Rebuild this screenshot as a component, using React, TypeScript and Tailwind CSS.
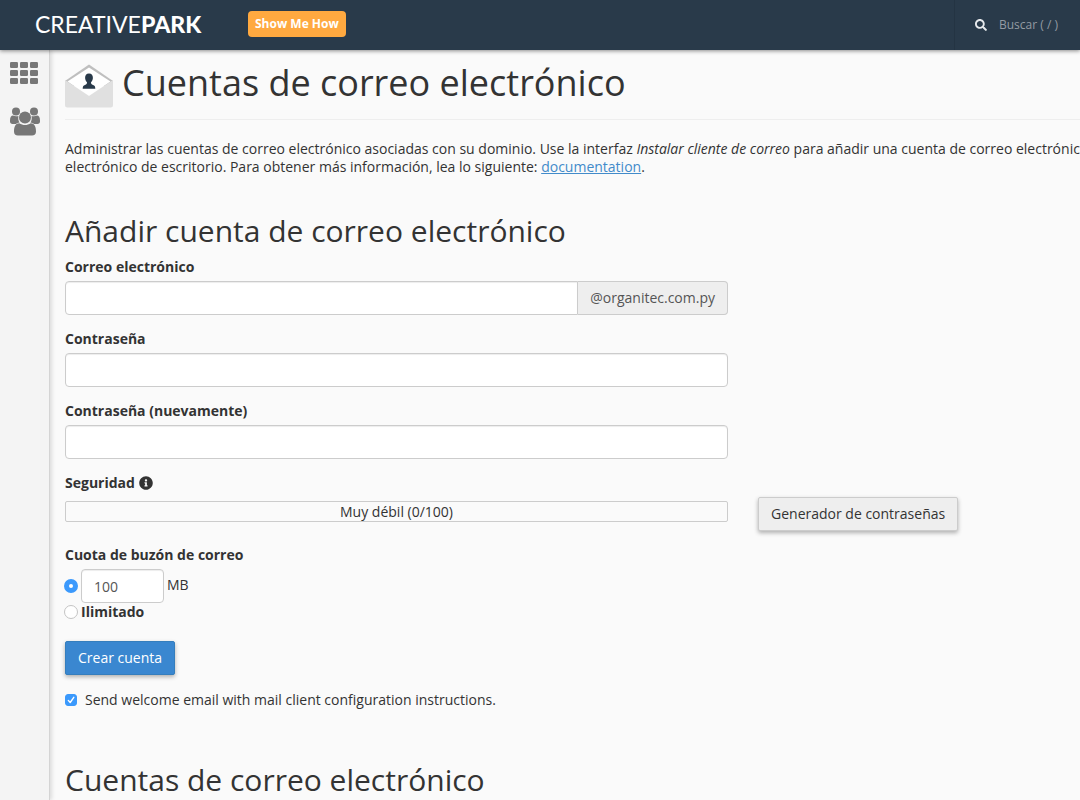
import type { InputHTMLAttributes } from 'react';
import { FaInfoCircle, FaSearch } from 'react-icons/fa';

function GridIcon() {
  return (
    <svg width="28" height="23" viewBox="0 0 28 23" fill="#777" aria-hidden="true">
      {[0, 8, 16].map((y) =>
        [0, 10, 20].map((x) => <rect key={`${x}-${y}`} x={x} y={y} width="8" height="6" rx="1.3" />),
      )}
    </svg>
  );
}

function UsersIcon() {
  return (
    <svg width="30" height="29" viewBox="0 0 30 29" fill="#777" aria-hidden="true">
      <circle cx="6" cy="4.5" r="4" />
      <circle cx="24" cy="4.5" r="4" />
      <path d="M0 13.5C0 10.500 1.200 8.600 3 8.600C4.500 9.400 7 9.600 8.400 8.900C8 11.500 8.400 13.800 9.500 15.400C8 15.500 6.800 16 5.800 17H2.500C1 17 0 16 0 14.600Z" />
      <path d="M30 13.500C30 10.500 28.800 8.600 27 8.600C25.500 9.400 23 9.600 21.600 8.900C22 11.500 21.600 13.800 20.500 15.400C22 15.500 23.200 16 24.200 17H27.500C29 17 30 16 30 14.600Z" />
      <circle cx="15" cy="10.500" r="6" />
      <path d="M4 24.500C4 19.500 5.700 16.300 9.300 16.300C11 17.500 13 18.100 15 18.100C17 18.100 19 17.500 20.700 16.300C24.300 16.300 26 19.500 26 24.500C26 27 24.600 28.500 22 28.500H8C5.400 28.500 4 27 4 24.500Z" />
    </svg>
  );
}

function MailIcon() {
  return (
    <svg className="shrink-0" width="48" height="44" viewBox="0 0 48 44" aria-hidden="true">
      <path d="M0 17L24 0.500L48 17V22H0Z" fill="#bfbfbf" />
      <path d="M2.500 17.500L24 3.500L45.500 17.500L24 32Z" fill="#fff" />
      <path d="M0 16L24 32L48 16V41Q48 43.500 45.500 43.500H2.500Q0 43.500 0 41Z" fill="#e0e0e0" />
      <path d="M24 9.500C26.700 9.500 28 11.500 27.900 14C27.800 16 27 17.300 26 18.200C26 20 26.500 20.400 28 20.900C29.800 21.500 30.300 22.500 30.300 24.800H17.700C17.700 22.500 18.200 21.500 20 20.900C21.500 20.400 22 20 22 18.200C21 17.300 20.200 16 20.100 14C20 11.500 21.300 9.500 24 9.500Z" fill="#293a4a" />
    </svg>
  );
}

const inputLook =
  'h-[34px] border border-[#ccc] bg-white px-3 text-sm text-[#555] shadow-[inset_0_1px_1px_rgba(0,0,0,0.075)] outline-none';

function Field({
  id,
  label,
  suffix,
  ...rest
}: { id: string; label: string; suffix?: string } & InputHTMLAttributes<HTMLInputElement>) {
  return (
    <div className="mb-[15px] w-full max-w-[663px]">
      <label htmlFor={id} className="mb-[5px] block font-bold">
        {label}
      </label>
      <div className="flex">
        <input
          id={id}
          {...rest}
          className={`${inputLook} min-w-0 flex-1 ${suffix ? 'rounded-l-[4px]' : 'rounded-[4px]'}`}
        />
        {suffix && (
          <span className="flex h-[34px] items-center rounded-r-[4px] border border-l-0 border-[#ccc] bg-[#eee] px-3 text-[#555]">
            {suffix}
          </span>
        )}
      </div>
    </div>
  );
}

const radioLook =
  'size-[14px] shrink-0 appearance-none rounded-full border border-[#c4c4c4] bg-white checked:border-[5px] checked:border-[#3b99fc]';

export default function App() {
  return (
    <div className="flex min-h-screen flex-col bg-[#fafafa] font-['Open_Sans',sans-serif] text-sm leading-[18px] text-[#333]">
      <header className="z-10 flex h-[50px] items-stretch bg-[#293a4a] shadow-[0_1px_4px_rgba(0,0,0,0.45)]">
        <div className="flex w-[248px] shrink-0 items-center pl-[35px]">
          <a href="#inicio" className="pb-[2px] font-['Lato',sans-serif] text-[23px] leading-7 text-white">
            CREATIVE<span className="font-black">PARK</span>
          </a>
        </div>
        <button
          type="button"
          className="mt-[11px] h-[26px] rounded-[4px] bg-[#ffa940] px-[7px] text-xs font-bold text-white"
        >
          Show Me How
        </button>
        <label className="ml-auto flex w-[126px] items-center border-l border-[#243443] pl-5">
          <FaSearch className="size-3 text-[#e6e9ec]" aria-hidden="true" />
          <input
            type="search"
            aria-label="Buscar"
            placeholder="Buscar ( / )"
            className="ml-3 w-20 bg-transparent text-xs text-white outline-none placeholder:text-[#939ba3]"
          />
        </label>
      </header>

      <div className="flex flex-1">
        <nav className="flex w-[50px] shrink-0 flex-col items-start gap-[22px] border-r border-[#d4d4d4] bg-[#f4f4f4] pt-3 pl-[10px] shadow-[2px_0_4px_rgba(0,0,0,0.12)]">
          <a href="#inicio" aria-label="Inicio">
            <GridIcon />
          </a>
          <a href="#usuarios" aria-label="Usuarios">
            <UsersIcon />
          </a>
        </nav>

        <main className="min-w-0 flex-1 overflow-hidden pl-[15px]">
          <div className="flex h-[70px] items-start gap-[9px] border-b border-[#eee] pt-[14px]">
            <MailIcon />
            <h1 className="text-4xl leading-[38px]">Cuentas de correo electrónico</h1>
          </div>

          <p className="mt-5 whitespace-nowrap">
            Administrar las cuentas de correo electrónico asociadas con su dominio. Use la interfaz{' '}
            <em>Instalar cliente de correo</em> para añadir una cuenta de correo electrónico
            <br />
            electrónico de escritorio. Para obtener más información, lea lo siguiente:{' '}
            <a href="#documentation" className="text-[#428bca] underline">
              documentation
            </a>
            .
          </p>

          <form>
            <h2 className="mt-[38px] mb-[11px] text-3xl leading-[33px]">Añadir cuenta de correo electrónico</h2>
            <Field id="email" label="Correo electrónico" type="text" suffix="@organitec.com.py" />
            <Field id="password" label="Contraseña" type="password" />
            <Field id="password-again" label="Contraseña (nuevamente)" type="password" />

            <div className="mb-[5px] flex items-center gap-1 font-bold">
              Seguridad
              <FaInfoCircle className="size-[14px]" aria-hidden="true" />
            </div>
            <div className="mb-[15px] flex items-start gap-[30px]">
              <div className="mt-1 h-[21px] w-full max-w-[663px] rounded-[2px] border border-[#ccc] text-center leading-[19px]">
                Muy débil (0/100)
              </div>
              <button
                type="button"
                className="h-[34px] shrink-0 rounded-[2px] border border-[#ccc] bg-[#eee] px-3 shadow-[0_2px_4px_rgba(0,0,0,0.3)]"
              >
                Generador de contraseñas
              </button>
            </div>

            <fieldset className="mb-5">
              <legend className="mb-[5px] font-bold">Cuota de buzón de correo</legend>
              <div className="-ml-px flex items-center">
                <input type="radio" name="quota" aria-label="Cuota en MB" defaultChecked className={radioLook} />
                <input
                  type="text"
                  aria-label="Cuota"
                  defaultValue="100"
                  className={`${inputLook} mx-[3px] w-[83px] rounded-[4px]`}
                />
                <span className="pb-[2px]">MB</span>
              </div>
              <label className="-ml-px flex items-center gap-[3px] font-bold">
                <input type="radio" name="quota" className={radioLook} />
                Ilimitado
              </label>
            </fieldset>

            <button
              type="button"
              className="h-[34px] rounded-[2px] border border-[#357ebd] bg-[#3a87d0] px-3 text-white shadow-[0_2px_4px_rgba(0,0,0,0.3)]"
            >
              Crear cuenta
            </button>

            <label className="mt-4 flex items-center gap-2">
              <span className="grid size-3 shrink-0">
                <input
                  type="checkbox"
                  defaultChecked
                  className="peer col-start-1 row-start-1 size-3 appearance-none rounded-[3px] border border-[#c4c4c4] bg-white checked:border-[#3b99fc] checked:bg-[#3b99fc]"
                />
                <svg
                  viewBox="0 0 12 12"
                  className="pointer-events-none invisible col-start-1 row-start-1 size-3 peer-checked:visible"
                  fill="none"
                  stroke="#fff"
                  strokeWidth="1.400"
                  strokeLinecap="round"
                  strokeLinejoin="round"
                  aria-hidden="true"
                >
                  <path d="M3.300 6.400L5.200 8.500L8.800 3.300" />
                </svg>
              </span>
              Send welcome email with mail client configuration instructions.
            </label>
          </form>

          <h2 className="mt-[54px] text-3xl leading-[33px]">Cuentas de correo electrónico</h2>
        </main>
      </div>
    </div>
  );
}
